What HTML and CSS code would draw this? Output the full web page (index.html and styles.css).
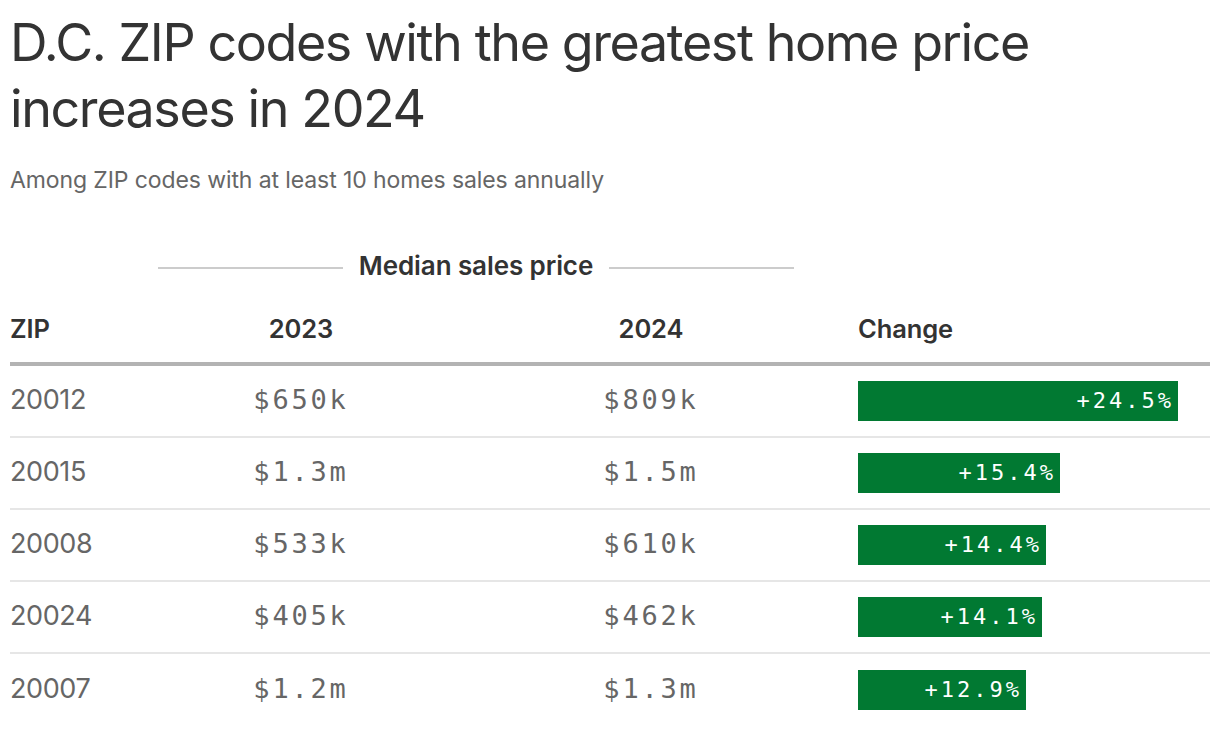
FILE: index.html
```html
<!DOCTYPE html>
<html lang="en">
<head>
<meta charset="utf-8">
<title>D.C. ZIP codes with the greatest home price increases in 2024</title>
<link rel="stylesheet" href="styles.css">
</head>
<body>
<main class="chart">
  <h1 class="title">D.C. ZIP codes with the greatest home price increases in 2024</h1>
  <p class="subtitle">Among ZIP codes with at least 10 homes sales annually</p>

  <div class="table">
    <div class="spanner-row">
      <div class="spanner">
        <span class="rule"></span>
        <span class="spanner-label">Median sales price</span>
        <span class="rule"></span>
      </div>
    </div>
    <div class="grid head">
      <div class="cell">ZIP</div>
      <div class="cell center">2023</div>
      <div class="cell center">2024</div>
      <div class="cell">Change</div>
    </div>

    <div class="grid row">
      <div class="cell zip">20012</div>
      <div class="cell center mono">$650k</div>
      <div class="cell center mono">$809k</div>
      <div class="cell"><div class="bar" style="width:320px">+24.5%</div></div>
    </div>
    <div class="grid row">
      <div class="cell zip">20015</div>
      <div class="cell center mono">$1.3m</div>
      <div class="cell center mono">$1.5m</div>
      <div class="cell"><div class="bar" style="width:202px">+15.4%</div></div>
    </div>
    <div class="grid row">
      <div class="cell zip">20008</div>
      <div class="cell center mono">$533k</div>
      <div class="cell center mono">$610k</div>
      <div class="cell"><div class="bar" style="width:188px">+14.4%</div></div>
    </div>
    <div class="grid row">
      <div class="cell zip">20024</div>
      <div class="cell center mono">$405k</div>
      <div class="cell center mono">$462k</div>
      <div class="cell"><div class="bar" style="width:184px">+14.1%</div></div>
    </div>
    <div class="grid row last">
      <div class="cell zip">20007</div>
      <div class="cell center mono">$1.2m</div>
      <div class="cell center mono">$1.3m</div>
      <div class="cell"><div class="bar" style="width:168px">+12.9%</div></div>
    </div>
  </div>
</main>
</body>
</html>
```

FILE: styles.css
```css
* { box-sizing: border-box; }

html, body {
  margin: 0;
  padding: 0;
  background: #ffffff;
}

body {
  font-family: "Inter", "Roboto", "Liberation Sans", sans-serif;
  color: #333333;
}

.chart {
  padding: 10px 10px 0 10px;
}

.title {
  margin: 0;
  font-size: 52px;
  line-height: 66px;
  font-weight: 400;
  letter-spacing: -1.4px;
  color: #333333;
}

.subtitle {
  margin: 24px 0 0 0;
  font-size: 23px;
  line-height: 28px;
  font-weight: 400;
  letter-spacing: -0.1px;
  color: #666666;
}

.table {
  margin-top: 56px;
}

.grid {
  display: grid;
  grid-template-columns: 84px 286px 286px 1fr;
  column-gap: 64px;
  align-items: center;
}

.spanner-row {
  display: grid;
  grid-template-columns: 84px 636px 1fr;
  column-gap: 64px;
}

.spanner {
  grid-column: 2;
  display: flex;
  align-items: center;
  gap: 16px;
}

.rule {
  flex: 1;
  height: 2px;
  margin-top: 4px;
  background: #cccccc;
}

.spanner-label {
  font-size: 26px;
  line-height: 32px;
  font-weight: 600;
  letter-spacing: -0.1px;
  color: #333333;
}

.head {
  padding-top: 31px;
  padding-bottom: 17px;
  border-bottom: 4px solid #b3b3b3;
  font-size: 25.5px;
  line-height: 32px;
  font-weight: 600;
  letter-spacing: -0.1px;
  color: #333333;
}

.center { text-align: center; }

.row {
  height: 72px;
  border-bottom: 2px solid #e6e6e6;
}

.row.last { border-bottom: none; }

.zip {
  padding-bottom: 4px;
  font-size: 27px;
  letter-spacing: -0.4px;
  color: #666666;
}

.mono {
  padding-bottom: 4px;
  font-family: "DejaVu Sans Mono", "Liberation Mono", monospace;
  font-size: 27px;
  letter-spacing: 2.8px;
  color: #666666;
}

.bar {
  height: 40px;
  background: #017932;
  color: #ffffff;
  font-family: "DejaVu Sans Mono", "Liberation Mono", monospace;
  font-size: 22px;
  line-height: 40px;
  letter-spacing: 3px;
  text-align: right;
  padding-right: 4px;
}
```
